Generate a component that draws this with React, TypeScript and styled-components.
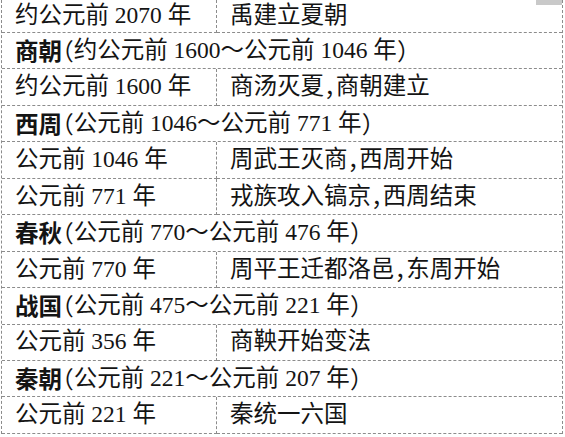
import React from 'react';
import styled, { createGlobalStyle } from 'styled-components';

const GlobalStyle = createGlobalStyle`
  html, body {
    margin: 0;
    padding: 0;
    background: #fff;
  }
  body {
    width: 565px;
    height: 437px;
    overflow: hidden;
  }
`;

type Row =
  | { kind: 'period'; name: string; range: string }
  | { kind: 'event'; date: string; event: string };

const rows: Row[] = [
  { kind: 'event', date: '约公元前 2070 年', event: '禹建立夏朝' },
  { kind: 'period', name: '商朝', range: '（约公元前 1600～公元前 1046 年）' },
  { kind: 'event', date: '约公元前 1600 年', event: '商汤灭夏，商朝建立' },
  { kind: 'period', name: '西周', range: '（公元前 1046～公元前 771 年）' },
  { kind: 'event', date: '公元前 1046 年', event: '周武王灭商，西周开始' },
  { kind: 'event', date: '公元前 771 年', event: '戎族攻入镐京，西周结束' },
  { kind: 'period', name: '春秋', range: '（公元前 770～公元前 476 年）' },
  { kind: 'event', date: '公元前 770 年', event: '周平王迁都洛邑，东周开始' },
  { kind: 'period', name: '战国', range: '（公元前 475～公元前 221 年）' },
  { kind: 'event', date: '公元前 356 年', event: '商鞅开始变法' },
  { kind: 'period', name: '秦朝', range: '（公元前 221～公元前 207 年）' },
  { kind: 'event', date: '公元前 221 年', event: '秦统一六国' },
];

const Page = styled.div`
  position: relative;
  width: 565px;
  height: 437px;
  font-family: 'Liberation Serif', 'Noto Sans CJK SC', serif;
  font-size: 23.5px;
  color: #141414;
`;

const Table = styled.div`
  display: grid;
  grid-template-columns: 215px 1fr;
  grid-template-rows: 33px repeat(11, 36.45px);
  width: 560px;
  margin-left: 1px;
  border-left: 1px dashed #8c8c8c;
  border-right: 1px dashed #8c8c8c;
`;

const Cell = styled.div<{ $divider?: boolean; $wide?: boolean }>`
  display: flex;
  align-items: center;
  padding-left: 13px;
  grid-column: ${(p) => (p.$wide ? '1 / -1' : 'auto')};
  border-bottom: 1px dashed #8c8c8c;
  border-right: ${(p) => (p.$divider ? '1px dashed #8c8c8c' : 'none')};
  white-space: nowrap;
  line-height: 1;
`;

const Name = styled.span`
  font-family: 'Noto Sans CJK SC', sans-serif;
  font-weight: 700;
`;

const Punct = styled.span`
  font-family: 'Noto Sans CJK SC', sans-serif;
  font-feature-settings: 'halt';
`;

const Corner = styled.div`
  position: absolute;
  top: 0;
  right: 3px;
  width: 26px;
  height: 5px;
  background: #c9c9c9;
`;

const withPunct = (text: string) =>
  text.split(/([（），])/).map((part, i) =>
    /^[（），]$/.test(part) ? <Punct key={i}>{part}</Punct> : <React.Fragment key={i}>{part}</React.Fragment>,
  );

export default function App() {
  return (
    <Page>
      <GlobalStyle />
      <Table>
        {rows.map((row, i) =>
          row.kind === 'period' ? (
            <Cell key={i} $wide>
              <Name>{row.name}</Name>
              {withPunct(row.range)}
            </Cell>
          ) : (
            <React.Fragment key={i}>
              <Cell $divider>{row.date}</Cell>
              <Cell>{withPunct(row.event)}</Cell>
            </React.Fragment>
          ),
        )}
      </Table>
      <Corner />
    </Page>
  );
}
